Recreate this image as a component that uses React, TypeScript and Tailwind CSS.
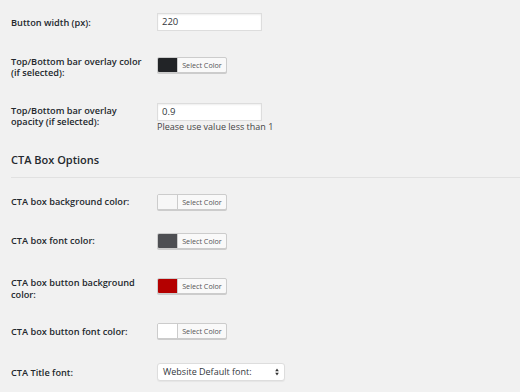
const font = { fontFamily: '"Open Sans", "Liberation Sans", sans-serif' };

function ColorButton({ color }: { color: string }) {
  return (
    <div className="flex h-[16px] w-[70px] overflow-hidden rounded-[2px] border border-[#cccccc] bg-[#f9f9f9] shadow-[0_1px_0_#cccccc]">
      <div className="w-[20px] border-r border-[#cccccc]" style={{ backgroundColor: color }} />
      <div className="flex flex-1 items-center justify-center text-[7.2px] text-[#555555]">Select Color</div>
    </div>
  );
}

function Label({ children, top }: { children: React.ReactNode; top: string }) {
  return (
    <div className={`w-[146px] shrink-0 pr-2 text-[9.2px] font-semibold leading-[11.5px] text-[#23282d] ${top}`}>
      {children}
    </div>
  );
}

function TextInput({ value }: { value: string }) {
  return (
    <div className="flex h-[18px] w-[105px] items-center border border-[#dddddd] bg-white px-[4px] text-[9.5px] text-[#32373c] shadow-[inset_0_1px_2px_rgba(0,0,0,0.07)]">
      {value}
    </div>
  );
}

export default function App() {
  return (
    <div className="h-[392px] w-[520px] overflow-hidden bg-[#f1f1f1] pl-[11px]" style={font}>
      <div className="flex h-[44px]">
        <Label top="pt-[17px]">Button width (px):</Label>
        <div className="mt-[13px]">
          <TextInput value="220" />
        </div>
      </div>

      <div className="flex h-[48px]">
        <Label top="pt-[11.5px]">
          Top/Bottom bar overlay color
          <br />
          (if selected):
        </Label>
        <div className="mt-[13px]">
          <ColorButton color="#222427" />
        </div>
      </div>

      <div className="flex h-[44px]">
        <Label top="pt-[12.5px]">
          Top/Bottom bar overlay
          <br />
          opacity (if selected):
        </Label>
        <div className="mt-[11px]">
          <TextInput value="0.9" />
          <p className="text-[9px] leading-[12px] text-[#444444]">Please use value less than 1</p>
        </div>
      </div>

      <h2 className="mt-[16px] text-[11px] font-semibold leading-[16px] text-[#23282d]">CTA Box Options</h2>
      <div className="mt-[9px] border-t border-[#e1e1e1]" />

      <div className="flex h-[39px]">
        <Label top="pt-[18px]">CTA box background color:</Label>
        <div className="mt-[16px]">
          <ColorButton color="#f7f7f7" />
        </div>
      </div>

      <div className="flex h-[45px]">
        <Label top="pt-[18px]">CTA box font color:</Label>
        <div className="mt-[16px]">
          <ColorButton color="#4e4f53" />
        </div>
      </div>

      <div className="flex h-[45px]">
        <Label top="pt-[15px]">
          CTA box button background
          <br />
          color:
        </Label>
        <div className="mt-[16px]">
          <ColorButton color="#b40000" />
        </div>
      </div>

      <div className="flex h-[40px]">
        <Label top="pt-[19px]">CTA box button font color:</Label>
        <div className="mt-[16px]">
          <ColorButton color="#ffffff" />
        </div>
      </div>

      <div className="flex">
        <Label top="pt-[20px]">CTA Title font:</Label>
        <div className="mt-[16px] flex h-[18px] w-[128px] items-center justify-between rounded-[3px] border border-[#dddddd] bg-white pl-[5px] pr-[5px] text-[9px] text-[#32373c] shadow-[0_1px_1px_rgba(0,0,0,0.05)]">
          <span>Website Default font:</span>
          <svg width="4" height="8" viewBox="0 0 4 8">
            <path d="M2 0.5 L3.8 3.2 L0.2 3.2 Z" fill="#333" />
            <path d="M2 7.5 L3.8 4.8 L0.2 4.8 Z" fill="#333" />
          </svg>
        </div>
      </div>
    </div>
  );
}
